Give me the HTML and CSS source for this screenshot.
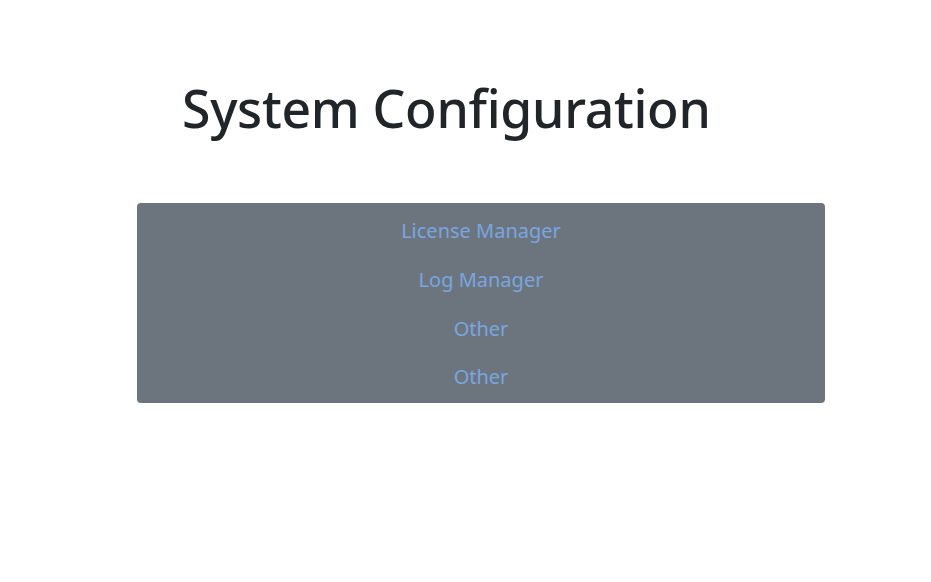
FILE: index.html
```html
<!DOCTYPE html>
<html>
<head>
<meta charset="utf-8">
<link rel="stylesheet" href="styles.css">
</head>
<body>
<div class="page">
  <h1 class="title">System Configuration</h1>
  <nav class="menu">
    <a class="menu-item" href="#">License Manager</a>
    <a class="menu-item" href="#">Log Manager</a>
    <a class="menu-item" href="#">Other</a>
    <a class="menu-item" href="#">Other</a>
  </nav>
</div>
</body>
</html>
```
FILE: styles.css
```css
html, body {
  margin: 0;
  padding: 0;
  background: #fff;
}
body {
  font-family: "Noto Sans", "Open Sans", sans-serif;
  color: #212529;
}
.page {
  padding-top: 72px;
  padding-left: 137px;
  width: 688px;
}
.title {
  margin: 0 0 0 45px;
  font-size: 51.7px;
  font-weight: 500;
  line-height: 72px;
  color: #212529;
  letter-spacing: -0.3px;
}
.menu {
  margin-top: 59px;
  background: #6c757d;
  border-radius: 4px;
  display: flex;
  flex-direction: column;
  align-items: center;
  padding: 5px 0 0;
  height: 195px;
}
.menu-item {
  display: block;
  height: 49.5px;
  line-height: 46px;
  font-size: 20px;
  color: #79a6e0;
  text-decoration: none;
}
```
